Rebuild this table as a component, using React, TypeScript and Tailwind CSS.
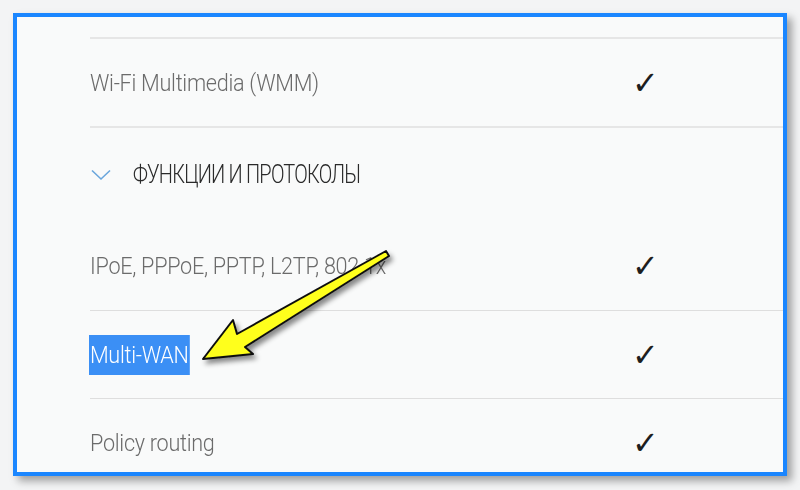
import React from 'react';

const Check = () => (
  <span className="text-[32px] leading-none text-[#1e1e1e] -ml-[3px]" style={{ fontFamily: '"DejaVu Sans", sans-serif' }}>
    ✓
  </span>
);

function Row({
  label,
  h,
  border = 'thin',
  selected = false,
}: {
  label: string;
  h: string;
  border?: 'thin' | 'thick' | 'none';
  selected?: boolean;
}) {
  const b =
    border === 'thick' ? 'border-b-2 border-[#e6e6e6]' : border === 'thin' ? 'border-b border-[#dedede]' : '';
  return (
    <div className={`flex items-center ml-[73px] ${h} ${b}`}>
      <div className="w-[545px]">
        <span
          className={`text-[24px] font-light tracking-[-0.3px] leading-[40px] inline-block origin-left scale-x-[0.9] ${
            selected ? 'bg-[#3b8ff5] text-white px-[1px] -ml-[1px]' : 'text-[#6b6b6b]'
          }`}
        >
          {label}
        </span>
      </div>
      <Check />
    </div>
  );
}

export default function App() {
  return (
    <div
      className="relative w-[800px] h-[490px] bg-[#f3f4f5] overflow-hidden"
      style={{ fontFamily: 'Roboto, "Noto Sans", sans-serif' }}
    >
      {/* framed screenshot */}
      <div className="absolute left-[13px] top-[13px] w-[774px] h-[463px] border-4 border-[#1a86ff] bg-[#f9fafa] overflow-hidden shadow-[5px_5px_8px_rgba(0,0,0,0.35)]">
        <div className="h-[22px] ml-[73px] border-b-2 border-[#e6e6e6]" />
        <Row label="Wi-Fi Multimedia (WMM)" h="h-[89px]" border="thick" />
        <div className="flex items-center h-[94px] ml-[74px] gap-[22px]">
          <svg width="20" height="12" viewBox="0 0 20 12" fill="none">
            <path d="M1 1.5 L10 10 L19 1.5" stroke="#6aa6dc" strokeWidth="1.6" />
          </svg>
          <span className="text-[25px] font-light text-[#2a2a2a] tracking-[-1px] inline-block origin-left scale-x-[0.8]">
            ФУНКЦИИ И ПРОТОКОЛЫ
          </span>
        </div>
        <Row label="IPoE, PPPoE, PPTP, L2TP, 802.1x" h="h-[89px]" border="thin" />
        <Row label="Multi-WAN" h="h-[88px]" border="thin" selected />
        <Row label="Policy routing" h="h-[88px]" border="none" />
      </div>

      {/* arrow overlay */}
      <svg className="absolute left-0 top-0" width="800" height="490" viewBox="0 0 800 490">
        <defs>
          <filter id="sh" x="-20%" y="-20%" width="140%" height="140%">
            <feDropShadow dx="3" dy="4" stdDeviation="2.5" floodColor="#000" floodOpacity="0.45" />
          </filter>
        </defs>
        <path
          d="M203 359 L233 320 L237 334 L386 251 L389 256 L245 347 L253 354 Z"
          fill="#ffff1a"
          stroke="#111"
          strokeWidth="2"
          strokeLinejoin="round"
          filter="url(#sh)"
        />
      </svg>
    </div>
  );
}
